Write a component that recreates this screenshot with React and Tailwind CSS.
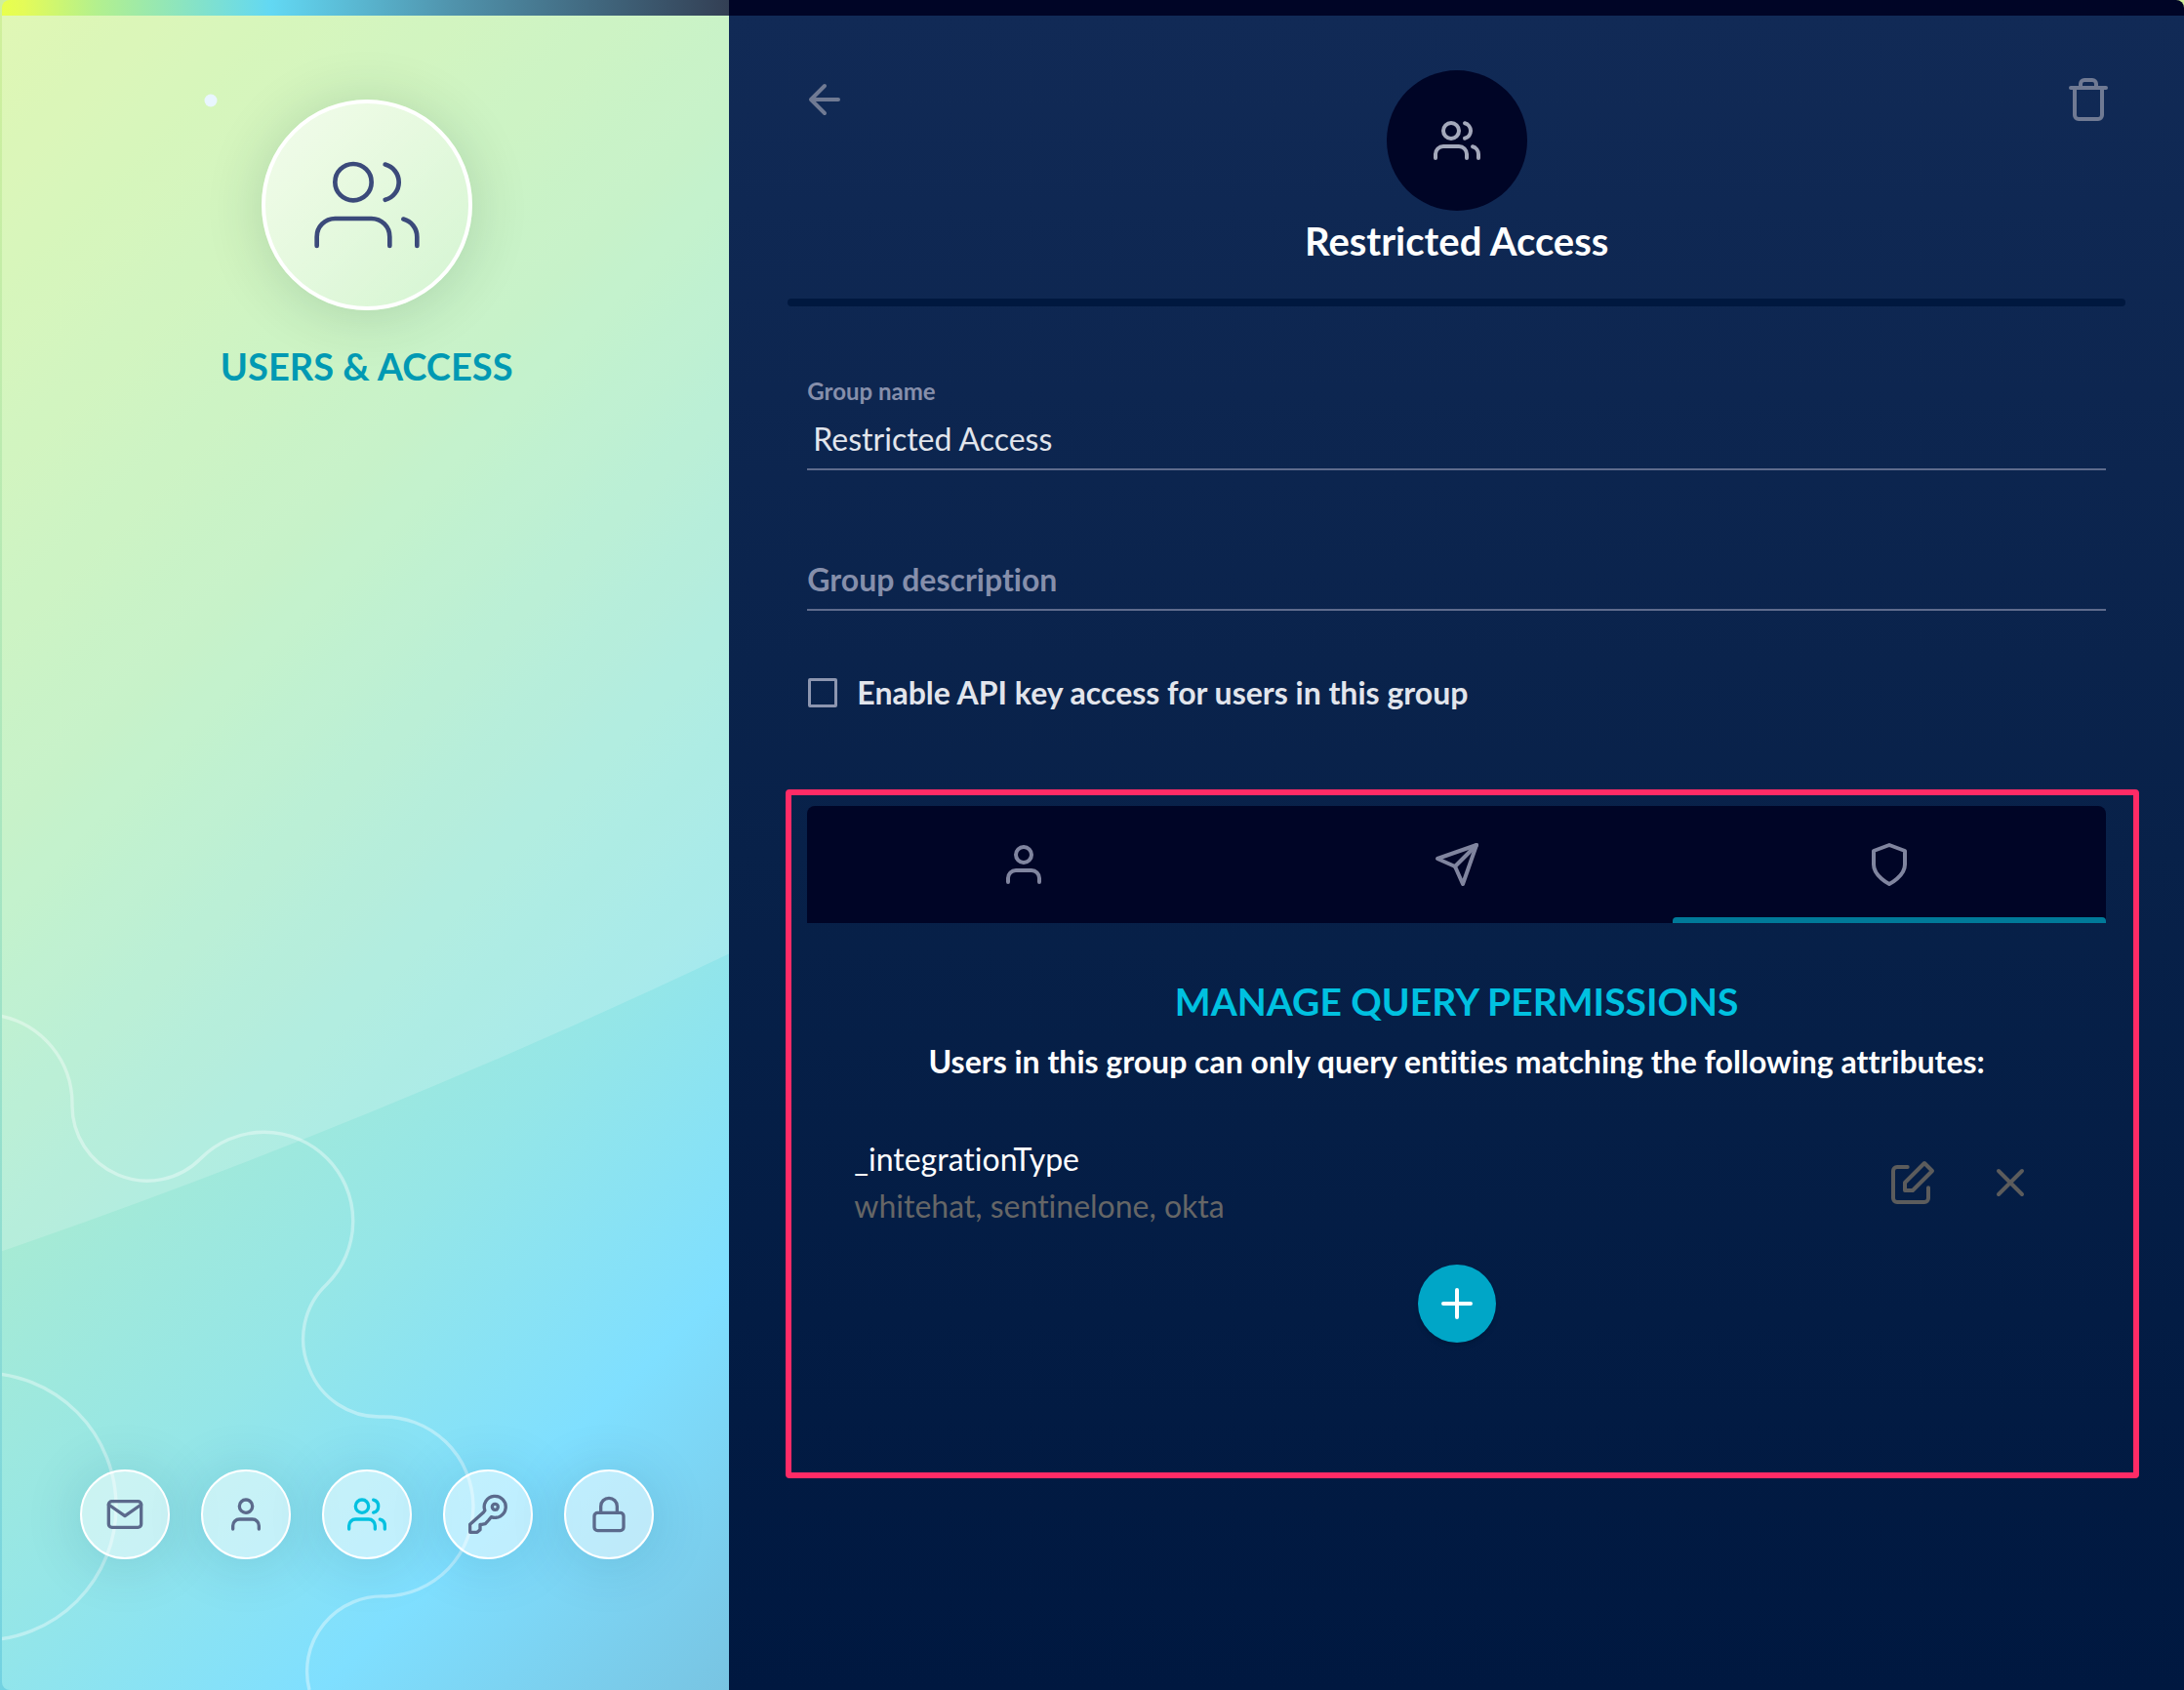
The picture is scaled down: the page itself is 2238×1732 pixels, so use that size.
import React from "react";

const Svg = ({ className = "", w = 2, children }) => (
  <svg viewBox="0 0 24 24" fill="none" stroke="currentColor" strokeWidth={w} strokeLinecap="round" strokeLinejoin="round" className={`overflow-visible ${className}`} aria-hidden="true">
    {children}
  </svg>
);

const Users = (p) => (
  <Svg {...p}>
    <path d="M17 21v-2a4 4 0 0 0-4-4H5a4 4 0 0 0-4 4v2" />
    <circle cx="9" cy="7" r="4" />
    <path d="M23 21v-2a4 4 0 0 0-3-3.87" />
    <path d="M16 3.13a4 4 0 0 1 0 7.75" />
  </Svg>
);
const User = (p) => (
  <Svg {...p}>
    <path d="M20 21v-2a4 4 0 0 0-4-4H8a4 4 0 0 0-4 4v2" />
    <circle cx="12" cy="7" r="4" />
  </Svg>
);
const Mail = (p) => (
  <Svg {...p}>
    <path d="M4 4h16c1.1 0 2 .9 2 2v12c0 1.1-.9 2-2 2H4c-1.1 0-2-.9-2-2V6c0-1.1.9-2 2-2z" />
    <path d="M22 6l-10 7L2 6" />
  </Svg>
);
const Key = (p) => (
  <Svg {...p}>
    <path d="M10.1 9.6L9.4 10.6L1 18.2V23H5.4L7.2 21.4V18.2H8.2L10.4 17.8L12.4 15.6L14 13.6A6.6 6.6 0 1 0 10.1 9.6Z" />
    <circle cx="16.4" cy="7.4" r="1.8" />
  </Svg>
);
const Lock = (p) => (
  <Svg {...p}>
    <rect x="3" y="11" width="18" height="11" rx="2" />
    <path d="M7 11V7a5 5 0 0 1 10 0v4" />
  </Svg>
);
const ArrowLeft = (p) => (
  <Svg {...p}>
    <path d="M19 12H5M12 19l-7-7 7-7" />
  </Svg>
);
const Trash = (p) => (
  <Svg {...p}>
    <path d="M3 6h18" />
    <path d="M19 6v14a2 2 0 0 1-2 2H7a2 2 0 0 1-2-2V6m3 0V4a2 2 0 0 1 2-2h4a2 2 0 0 1 2 2v2" />
  </Svg>
);
const Send = (p) => (
  <Svg {...p}>
    <path d="M22 2L11 13" />
    <path d="M22 2l-7 20-4-9-9-4 20-7z" />
  </Svg>
);
const Shield = (p) => (
  <Svg {...p}>
    <path d="M12 22s8-4 8-10V5l-8-3-8 3v7c0 6 8 10 8 10z" />
  </Svg>
);
const Edit = (p) => (
  <Svg {...p}>
    <path d="M20 14.66V20a2 2 0 0 1-2 2H4a2 2 0 0 1-2-2V6a2 2 0 0 1 2-2h5.34" />
    <polygon points="18 2 22 6 12 16 8 16 8 12 18 2" />
  </Svg>
);
const Close = (p) => (
  <Svg {...p}>
    <path d="M18 6L6 18M6 6l12 12" />
  </Svg>
);
const Plus = (p) => (
  <Svg {...p}>
    <path d="M12 5v14M5 12h14" />
  </Svg>
);

const navItems = [
  { label: "Invitations", Icon: Mail },
  { label: "Users", Icon: User },
  { label: "Groups", Icon: Users, active: true },
  { label: "API keys", Icon: Key },
  { label: "Security", Icon: Lock },
];

const tabs = [
  { label: "Members", Icon: User },
  { label: "Applications", Icon: Send },
  { label: "Permissions", Icon: Shield, active: true },
];

function Backdrop() {
  return (
    <svg viewBox="2 16 746 1716" preserveAspectRatio="xMinYMax slice" className="absolute inset-0 h-full w-full" fill="none" aria-hidden="true">
      <path d="M0 0H748V977Q385 1150 0 1283Z" fill="#fff" fillOpacity="0.18" />
      <g stroke="#fff" strokeOpacity="0.38" strokeWidth="3.4">
        <path d="M0 1041A92 92 0 0 1 74 1131A77 77 0 0 0 206 1187A91 91 0 1 1 335 1316A77 77 0 0 0 317 1403A77 77 0 0 0 391 1452A92 92 0 0 1 395 1636A77 77 0 0 0 317 1732" />
        <circle cx="-18" cy="1544" r="137" />
      </g>
      <circle cx="216" cy="103" r="6.5" fill="#e9f6ff" />
    </svg>
  );
}

function Sidebar() {
  return (
    <aside className="relative flex w-1/3 shrink-0 flex-col items-center overflow-hidden rounded-bl-lg bg-[linear-gradient(135deg,#d9f6a5_0%,#bbf0be_34%,#a1e9da_56%,#95e6e7_67%,#7fdfff_83%,#78c4e2_100%)] pt-[86px] pb-[134px] pl-0.5">
      <Backdrop />
      <div className="relative flex size-[216px] items-center justify-center rounded-full border-4 border-white bg-linear-to-br from-white/70 to-white/20 text-[#3b4a7a] shadow-[0_4px_60px_rgba(0,50,40,0.16)]">
        <Users w={1} className="size-28" />
      </div>
      <h1 className="relative mt-[31px] text-[38px] leading-[52px] font-bold text-[#0099b3]">USERS &amp; ACCESS</h1>
      <nav aria-label="Sections" className="relative mt-auto flex gap-8">
        {navItems.map(({ label, Icon, active }) => (
          <button
            key={label}
            type="button"
            aria-label={label}
            className={`flex size-[92px] items-center justify-center rounded-full border-2 border-white bg-white/50 shadow-[0_4px_60px_rgba(0,60,90,0.16)] ${active ? "text-[#00c1e0]" : "text-[#5b6a8c]"}`}
          >
            <Icon className="size-10" />
          </button>
        ))}
      </nav>
    </aside>
  );
}

function Permissions() {
  return (
    <section className="-mr-3.5 -ml-0.5 mt-[77px] min-h-[706px] rounded-sm border-6 border-[#ff2b66] pt-[11px] pr-7 pl-4">
      <div role="tablist" className="flex overflow-hidden rounded-t-lg bg-[#000526]">
        {tabs.map(({ label, Icon, active }) => (
          <button key={label} type="button" role="tab" aria-label={label} aria-selected={!!active} className="relative flex h-[120px] flex-1 items-center justify-center text-[#80859f]">
            <Icon className="size-12" />
            {active && <span className="absolute inset-x-0 bottom-0 h-1.5 rounded-t-sm bg-[#007a99]" />}
          </button>
        ))}
      </div>
      <h3 className="mt-14 text-center text-[39px] leading-[48px] font-bold text-[#00c1e0]">MANAGE QUERY PERMISSIONS</h3>
      <p className="mt-4 text-center text-[32px] leading-[44px] font-bold text-white">Users in this group can only query entities matching the following attributes:</p>
      <div className="mt-[54px] flex items-center justify-between pr-[74px] pl-12">
        <div className="text-[32px] leading-[48px]">
          <p className="text-white">_integrationType</p>
          <p className="text-[#666]">whitehat, sentinelone, okta</p>
        </div>
        <div className="flex gap-[52px] text-[#5c5c5c]">
          <button type="button" aria-label="Edit attribute"><Edit className="size-12" /></button>
          <button type="button" aria-label="Remove attribute"><Close className="size-12" /></button>
        </div>
      </div>
      <button type="button" aria-label="Add attribute" className="mx-auto mt-9 flex size-20 items-center justify-center rounded-full bg-[#00a6c7] text-white shadow-md">
        <Plus className="size-12" />
      </button>
    </section>
  );
}

export default function App() {
  return (
    <div className="flex min-h-screen flex-col bg-linear-to-b from-[#d0f09a] via-[#a8e6c0] to-[#72d2e2] pl-0.5 font-['Lato',sans-serif] [font-variant-ligatures:none]">
      <div className="flex h-4 shrink-0 overflow-hidden rounded-t-lg">
        <div className="w-1/3 bg-[linear-gradient(90deg,#e8ff4d_0%,#e4fb58_3%,#b3f08e_13%,#62d8f3_37%,#5093ac_62%,#333f54_100%)]" />
        <div className="flex-1 bg-[#000526]" />
      </div>
      <div className="flex grow">
        <Sidebar />
        <main className="flex-1 bg-linear-to-b from-[#112a56] via-[#082149] to-[#001840] px-15 pt-14">
          <header className="flex items-start justify-between px-3.5 pb-[34px]">
            <button type="button" aria-label="Back" className="mt-1.5 text-[#707a93]"><ArrowLeft className="size-12" /></button>
            <div className="flex flex-col items-center">
              <div className="flex size-36 items-center justify-center rounded-full bg-[#000526] text-[#a4a9bb]">
                <Users className="size-12" />
              </div>
              <h2 className="mt-1.5 text-[40px] leading-[50px] font-bold text-white">Restricted Access</h2>
            </div>
            <button type="button" aria-label="Delete group" className="mt-1.5 text-[#707a93]"><Trash className="size-12" /></button>
          </header>
          <hr className="h-2 rounded-sm border-0 bg-[#00183f]" />
          <form className="px-5 pt-[71px]">
            <label htmlFor="group-name" className="mb-px block text-[24px] leading-8 font-bold text-[#868fab]">Group name</label>
            <input id="group-name" defaultValue="Restricted Access" className="block h-16 w-full border-b-2 border-[#5e6b8c] bg-transparent pl-1.5 text-[32px] text-[#e2e5ec] outline-none" />
            <input aria-label="Group description" placeholder="Group description" className="mt-20 block h-16 w-full border-b-2 border-[#5e6b8c] bg-transparent text-[32px] font-bold text-[#e2e5ec] outline-none placeholder:text-[#868fab]" />
            <label className="mt-[62px] flex items-center gap-5 text-[32px] leading-[44px] font-bold text-[#e2e5ec]">
              <input type="checkbox" className="ml-px size-[30px] appearance-none rounded-xs border-3 border-[#8d96b0]" />
              Enable API key access for users in this group
            </label>
          </form>
          <Permissions />
        </main>
      </div>
    </div>
  );
}
